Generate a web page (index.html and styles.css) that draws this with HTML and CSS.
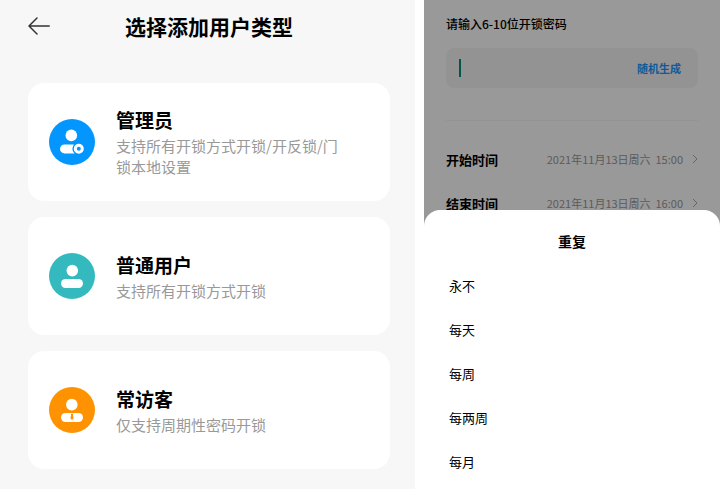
FILE: index.html
```html
<!DOCTYPE html>
<html lang="zh-CN">
<head>
    <meta charset="UTF-8">
    <meta name="viewport" content="width=device-width, initial-scale=1.0">
    <title>选择添加用户类型</title>
    <link rel="stylesheet" href="styles.css">
</head>
<body>

    <div class="screens">
        <!-- User type -->
        <main class="screen user-types">
            <header class="header">
                <button class="back" aria-label="返回">
                    <svg width="22" height="18" viewBox="0 0 22 18" fill="none" stroke="#333" stroke-width="1.5" stroke-linecap="round" stroke-linejoin="round">
                        <path d="M21.2 9H1M9 1L1 9l8 8"/>
                    </svg>
                </button>
                <h1>选择添加用户类型</h1>
            </header>

            <div class="cards">
                <button class="card">
                    <svg class="avatar" viewBox="0 0 46 46">
                        <circle cx="23" cy="23" r="23" fill="#0496ff"/>
                        <circle cx="22.3" cy="16.4" r="5.8" fill="#fff"/>
                        <rect x="11" y="25.4" width="21" height="9" rx="4.5" fill="#fff"/>
                        <circle cx="29.8" cy="29.8" r="6.4" fill="#0496ff"/>
                        <circle cx="29.8" cy="29.8" r="3.5" fill="none" stroke="#fff" stroke-width="3"/>
                    </svg>
                    <span class="card-text">
                        <span class="card-title">管理员</span>
                        <span class="card-desc">支持所有开锁方式开锁/开反锁/门锁本地设置</span>
                    </span>
                </button>

                <button class="card">
                    <svg class="avatar" viewBox="0 0 46 46">
                        <circle cx="23" cy="23" r="23" fill="#34b9be"/>
                        <circle cx="23.3" cy="17.6" r="5.8" fill="#fff"/>
                        <rect x="12" y="26" width="22" height="9" rx="4.5" fill="#fff"/>
                    </svg>
                    <span class="card-text">
                        <span class="card-title">普通用户</span>
                        <span class="card-desc">支持所有开锁方式开锁</span>
                    </span>
                </button>

                <button class="card">
                    <svg class="avatar" viewBox="0 0 46 46">
                        <circle cx="23" cy="23" r="23" fill="#ff9200"/>
                        <circle cx="22.8" cy="17.6" r="5.8" fill="#fff"/>
                        <rect x="12" y="26" width="22" height="9" rx="4.5" fill="#fff"/>
                        <path d="M21.8 26.8h2.4l-.3 1.2.7 3.2-1.6 1.8-1.6-1.8.7-3.2z" fill="#ff9200"/>
                    </svg>
                    <span class="card-text">
                        <span class="card-title">常访客</span>
                        <span class="card-desc">仅支持周期性密码开锁</span>
                    </span>
                </button>
            </div>
        </main>

        <!-- Password settings -->
        <section class="screen password">
            <label class="field-label" for="password">请输入6-10位开锁密码</label>
            <div class="field">
                <span class="caret"></span>
                <input id="password" type="text" inputmode="numeric" maxlength="10">
                <button class="random">随机生成</button>
            </div>

            <div class="times">
                <button class="time-row">
                    <span class="time-name">开始时间</span>
                    <span class="time-value">2021年11月13日周六&nbsp; 15:00</span>
                    <svg class="chevron" viewBox="0 0 6 10"><path d="M1 1l4 4-4 4"/></svg>
                </button>
                <button class="time-row">
                    <span class="time-name">结束时间</span>
                    <span class="time-value">2021年11月13日周六&nbsp; 16:00</span>
                    <svg class="chevron" viewBox="0 0 6 10"><path d="M1 1l4 4-4 4"/></svg>
                </button>
            </div>

            <!-- Repeat sheet -->
            <div class="overlay">
                <div class="sheet" role="dialog" aria-labelledby="sheetTitle">
                    <h2 id="sheetTitle">重复</h2>
                    <ul class="options">
                        <li><button>永不</button></li>
                        <li><button>每天</button></li>
                        <li><button>每周</button></li>
                        <li><button>每两周</button></li>
                        <li><button>每月</button></li>
                    </ul>
                </div>
            </div>
        </section>
    </div>

</body>
</html>
```
FILE: styles.css
```css
* {
    box-sizing: border-box;
}

body {
    margin: 0;
    background: #fff;
    color: #000;
    font-family: "Noto Sans CJK SC", sans-serif;
}

button,
input {
    margin: 0;
    padding: 0;
    border: none;
    background: none;
    color: inherit;
    font: inherit;
    text-align: left;
}

button {
    cursor: pointer;
}

.screens {
    display: grid;
    grid-template-columns: 415fr 296fr;
    gap: 9px;
    min-height: 100vh;
}

/* User type */
.user-types {
    padding: 11px 25px 18px 28px;
    background: #f7f7f7;
}

.header {
    display: grid;
    grid-template-columns: 1fr auto 1fr;
    align-items: center;
    margin-bottom: 42px;
}

.back {
    display: flex;
    justify-self: start;
}

h1 {
    margin: 0;
    font-size: 21px;
    line-height: 30px;
    font-weight: 700;
}

.cards {
    display: flex;
    flex-direction: column;
    gap: 16px;
}

.card {
    display: flex;
    align-items: center;
    gap: 21px;
    min-height: 118px;
    padding: 20px 44px 20px 21px;
    border-radius: 16px;
    background: #fff;
}

.avatar {
    flex: none;
    width: 46px;
    height: 46px;
}

.card-text {
    display: flex;
    flex-direction: column;
    gap: 2px;
}

.card-title {
    font-size: 19px;
    line-height: 26px;
    font-weight: 700;
}

.card-desc {
    color: #999;
    font-size: 15px;
    line-height: 21px;
}

/* Password settings */
.password {
    position: relative;
    padding: 14px 22px 0;
    background: #fff;
}

.field-label {
    display: block;
    margin-bottom: 14px;
    font-size: 12px;
    line-height: 20px;
    font-weight: 500;
}

.field {
    display: flex;
    align-items: center;
    height: 40px;
    padding: 0 17px 0 13px;
    border-radius: 8px;
    background: #f5f5f5;
}

.caret {
    width: 2px;
    height: 18px;
    background: #008f7a;
}

.field input {
    flex: 1;
    min-width: 0;
    outline: none;
    font-size: 12px;
}

.random {
    color: #1a96ff;
    font-size: 11px;
    font-weight: 700;
}

.times {
    margin-top: 32px;
    padding-top: 16px;
    border-top: 1px solid #f6f6f6;
}

.time-row {
    display: flex;
    align-items: center;
    width: 100%;
    height: 44px;
}

.time-name {
    flex: 1;
    font-size: 13px;
    font-weight: 700;
}

.time-value {
    color: #999;
    font-size: 11px;
}

.chevron {
    width: 6px;
    height: 10px;
    margin-left: 9px;
    fill: none;
    stroke: #aaa;
}

.overlay {
    position: absolute;
    inset: 0;
    display: flex;
    align-items: flex-end;
    background: rgba(0, 0, 0, 0.4);
}

.sheet {
    width: 100%;
    padding: 20px 25px 5px;
    border-radius: 16px 16px 0 0;
    background: #fff;
}

h2 {
    margin: 0 0 12px;
    font-size: 14px;
    line-height: 22px;
    font-weight: 700;
    text-align: center;
}

.options {
    margin: 0;
    padding: 0;
    list-style: none;
}

.options button {
    display: block;
    width: 100%;
    font-size: 13px;
    line-height: 44px;
}
```
